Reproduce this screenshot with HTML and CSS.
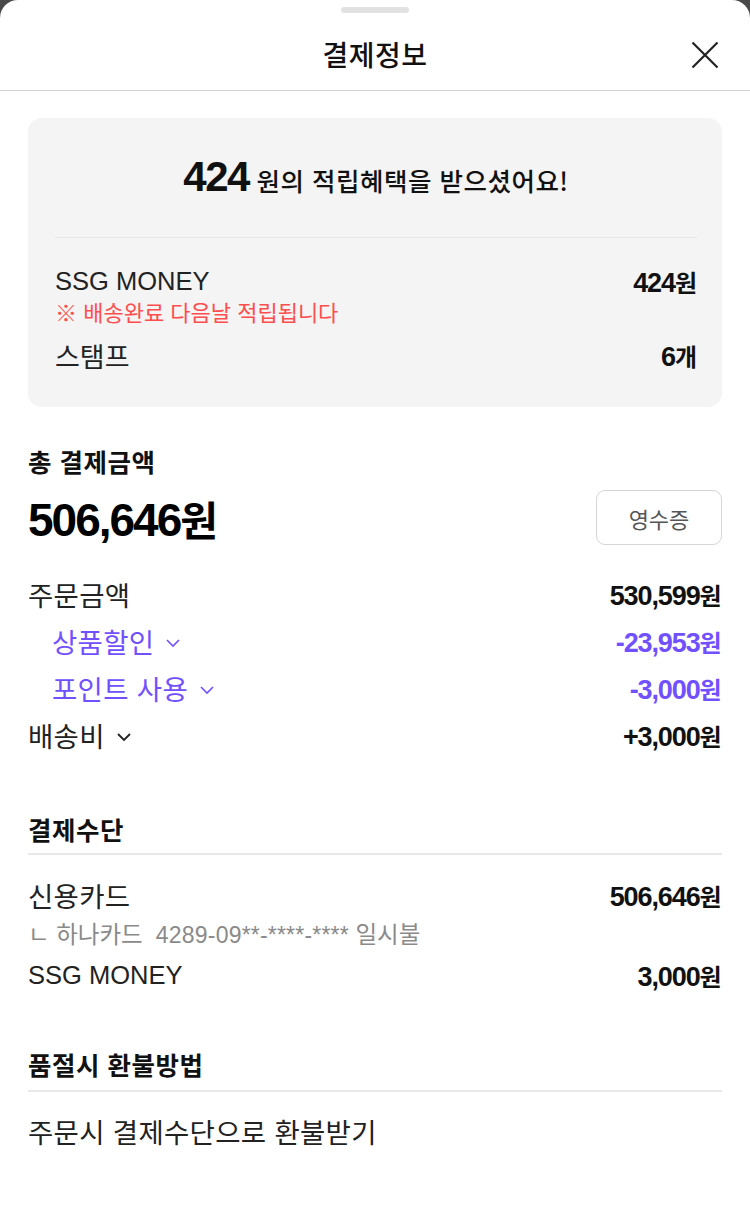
FILE: index.html
```html
<!DOCTYPE html>
<html lang="ko">
<head>
<meta charset="utf-8">
<title>결제정보</title>
<link rel="stylesheet" href="styles.css">
</head>
<body>
<div class="sheet">
  <div class="handle"></div>
  <header class="header">
    <h1 class="title">결제정보</h1>
    <button class="close" aria-label="닫기">
      <svg width="28" height="28" viewBox="0 0 28 28"><path d="M1.5 1.5 L26.5 26.5 M26.5 1.5 L1.5 26.5" stroke="#222" stroke-width="2.2" fill="none"/></svg>
    </button>
  </header>
  <main class="content">
    <section class="benefit">
      <p class="benefit-title"><span class="benefit-num">424</span> 원의 적립혜택을 받으셨어요!</p>
      <div class="benefit-divider"></div>
      <div class="brow">
        <span class="latin">SSG MONEY</span>
        <span class="val"><span class="num">424</span><span class="won">원</span></span>
      </div>
      <p class="note">※ 배송완료 다음날 적립됩니다</p>
      <div class="brow stamp">
        <span class="label">스탬프</span>
        <span class="val"><span class="num">6</span><span class="won">개</span></span>
      </div>
    </section>

    <section class="total">
      <h2 class="sec-title">총 결제금액</h2>
      <div class="total-row">
        <span class="val big"><span class="num">506,646</span><span class="won">원</span></span>
        <button class="receipt">영수증</button>
      </div>
      <div class="rows">
        <div class="row">
          <span class="label">주문금액</span>
          <span class="val"><span class="num">530,599</span><span class="won">원</span></span>
        </div>
        <div class="row sub purple">
          <span class="label">상품할인 <svg class="chev" width="16" height="10" viewBox="0 0 16 10"><path d="M2 2 L8 8 L14 2" stroke="currentColor" stroke-width="1.6" fill="none"/></svg></span>
          <span class="val"><span class="num">-23,953</span><span class="won">원</span></span>
        </div>
        <div class="row sub purple">
          <span class="label">포인트 사용 <svg class="chev" width="16" height="10" viewBox="0 0 16 10"><path d="M2 2 L8 8 L14 2" stroke="currentColor" stroke-width="1.6" fill="none"/></svg></span>
          <span class="val"><span class="num">-3,000</span><span class="won">원</span></span>
        </div>
        <div class="row">
          <span class="label">배송비 <svg class="chev" width="16" height="10" viewBox="0 0 16 10"><path d="M2 2 L8 8 L14 2" stroke="currentColor" stroke-width="1.8" fill="none"/></svg></span>
          <span class="val"><span class="num">+3,000</span><span class="won">원</span></span>
        </div>
      </div>
    </section>

    <section class="method">
      <h2 class="sec-title lined">결제수단</h2>
      <div class="row first">
        <span class="label">신용카드</span>
        <span class="val"><span class="num">506,646</span><span class="won">원</span></span>
      </div>
      <p class="card-info">ㄴ 하나카드 &nbsp;<span class="latin">4289-09**-****-****</span> 일시불</p>
      <div class="row last">
        <span class="label latin">SSG MONEY</span>
        <span class="val"><span class="num">3,000</span><span class="won">원</span></span>
      </div>
    </section>

    <section class="refund">
      <h2 class="sec-title lined">품절시 환불방법</h2>
      <p class="refund-text">주문시 결제수단으로 환불받기</p>
    </section>
  </main>
</div>
</body>
</html>
```

FILE: styles.css
```css
* { box-sizing: border-box; }
html, body { margin: 0; padding: 0; }
body {
  background: #4a4a4a;
  font-family: "Noto Sans CJK KR", "Liberation Sans", sans-serif;
  color: #222;
}
.sheet {
  background: #fff;
  border-radius: 18px 18px 0 0;
  min-height: 1228px;
  overflow: hidden;
}
.handle {
  width: 68px;
  height: 6px;
  border-radius: 3px;
  background: #e2e2e2;
  margin: 7px auto 0;
}
.header {
  position: relative;
  height: 78px;
  display: flex;
  align-items: center;
  justify-content: center;
  border-bottom: 1px solid #cfd3d7;
}
.title {
  margin: 0;
  font-size: 28px;
  font-weight: 500;
  letter-spacing: 0.5px;
  color: #111;
  line-height: 1;
  transform: translateY(2px);
}
.close {
  position: absolute;
  right: 31px;
  top: 28px;
  border: 0;
  background: none;
  padding: 0;
  width: 28px;
  height: 28px;
  display: block;
}
.close svg { display: block; }
.content { padding: 0 28px; }

.latin { font-family: "Liberation Sans", sans-serif; }
.val {
  display: inline-flex;
  align-items: baseline;
  color: #111;
}
.num {
  font-family: "Liberation Sans", sans-serif;
  font-weight: 700;
  font-size: 27px;
  letter-spacing: -1.1px;
}
.won {
  font-weight: 700;
  font-size: 24px;
}

.benefit {
  margin-top: 27px;
  background: #f4f4f4;
  border-radius: 14px;
  padding: 37px 25px 37px 27px;
}
.benefit-title {
  margin: 0;
  text-align: center;
  line-height: 44px;
  height: 44px;
  font-size: 25.5px;
  font-weight: 500;
  letter-spacing: 0.5px;
  color: #111;
}
.benefit-num {
  font-family: "Liberation Sans", sans-serif;
  font-weight: 700;
  font-size: 42px;
  letter-spacing: -1.5px;
}
.benefit-divider {
  height: 1px;
  background: #e6e6e6;
  margin-top: 38px;
}
.brow {
  display: flex;
  justify-content: space-between;
  align-items: center;
  height: 30px;
  margin-top: 28px;
  font-size: 27px;
  color: #222;
}
.brow .latin { font-size: 25.5px; }
.note {
  margin: 2px 0 0;
  line-height: 26px;
  font-size: 22px;
  color: #ff4d4d;
}
.brow.stamp { margin-top: 16px; }

.sec-title {
  margin: 0;
  font-size: 25.5px;
  font-weight: 700;
  letter-spacing: 0.5px;
  line-height: 28px;
  color: #111;
}
.total { margin-top: 40px; }
.total-row {
  display: flex;
  justify-content: space-between;
  align-items: center;
  height: 55px;
  margin-top: 15px;
}
.big .num { font-size: 46px; letter-spacing: -2px; color: #000; }
.big .won { font-size: 41px; color: #000; }
.receipt {
  width: 126px;
  height: 55px;
  border: 1.5px solid #d6d6d6;
  border-radius: 9px;
  background: #fff;
  font-family: "Noto Sans CJK KR", sans-serif;
  font-size: 22px;
  color: #555;
  padding: 0;
}
.rows {
  margin-top: 33px;
  display: flex;
  flex-direction: column;
  gap: 15px;
}
.row {
  display: flex;
  justify-content: space-between;
  align-items: center;
  height: 32px;
  font-size: 27.5px;
  letter-spacing: 0.3px;
  color: #222;
}
.row .latin { font-size: 25.5px; letter-spacing: 0; }
.label { display: flex; align-items: center; gap: 11px; }
.row.sub { padding-left: 24px; }
.purple, .purple .val { color: #7150ff; }
.chev { display: block; margin-top: 3px; }

.method { margin-top: 64px; }
.sec-title.lined {
  padding-bottom: 10px;
  border-bottom: 2px solid #e9e9e9;
}
.method .row.first { margin-top: 24px; }
.card-info {
  margin: 9px 0 0;
  line-height: 26px;
  font-size: 23.5px;
  color: #8a8a8a;
}
.card-info .latin { font-size: 23px; letter-spacing: 0.2px; }
.method .row.last { margin-top: 11px; }

.refund { margin-top: 59px; }
.sec-title.lined.refund-title { padding-bottom: 12px; }
.refund .sec-title.lined { padding-bottom: 12px; }
.refund-text {
  margin: 23px 0 0;
  line-height: 32px;
  font-size: 27.5px;
  letter-spacing: 0.3px;
  color: #222;
}
```
